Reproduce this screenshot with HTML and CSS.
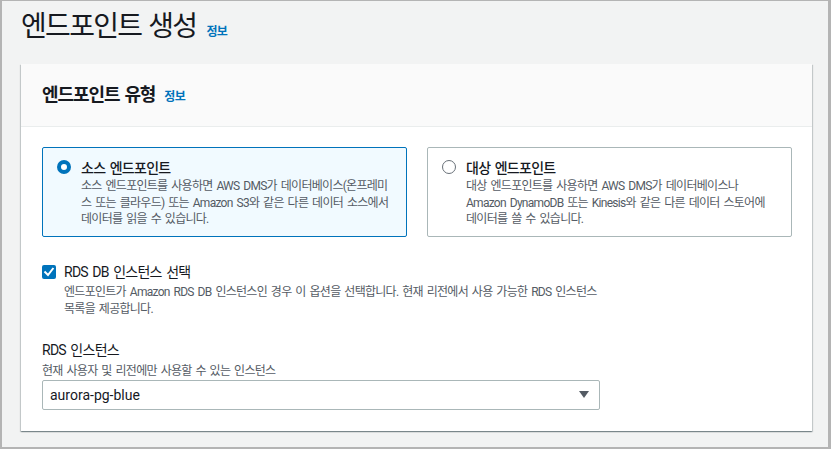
FILE: index.html
```html
<!DOCTYPE html>
<html lang="ko">
<head>
<meta charset="utf-8">
<title>엔드포인트 생성</title>
<link rel="stylesheet" href="styles.css">
</head>
<body>
<div class="page">
  <div class="page-head">
    <h1 class="page-title">엔드포인트 생성</h1>
    <a class="info" href="#">정보</a>
  </div>
  <section class="card">
    <div class="card-head">
      <h2 class="card-title">엔드포인트 유형</h2>
      <a class="info" href="#">정보</a>
    </div>
    <div class="card-body">
      <div class="tiles">
        <div class="tile selected">
          <span class="radio on"></span>
          <div class="tile-text">
            <div class="tile-label">소스 엔드포인트</div>
            <div class="desc">소스 엔드포인트를 사용하면 AWS DMS가 데이터베이스(온프레미<br>스 또는 클라우드) 또는 Amazon S3와 같은 다른 데이터 소스에서<br>데이터를 읽을 수 있습니다.</div>
          </div>
        </div>
        <div class="tile">
          <span class="radio"></span>
          <div class="tile-text">
            <div class="tile-label">대상 엔드포인트</div>
            <div class="desc">대상 엔드포인트를 사용하면 AWS DMS가 데이터베이스나<br>Amazon DynamoDB 또는 Kinesis와 같은 다른 데이터 스토어에<br>데이터를 쓸 수 있습니다.</div>
          </div>
        </div>
      </div>
      <div class="check-row">
        <span class="checkbox">
          <svg viewBox="0 0 14 14" width="14" height="14"><path d="M3.2 7.2 L6 10 L10.8 3.8" fill="none" stroke="#fff" stroke-width="2" stroke-linecap="square"/></svg>
        </span>
        <div class="check-text">
          <div class="field-label">RDS DB 인스턴스 선택</div>
          <div class="desc check-desc">엔드포인트가 Amazon RDS DB 인스턴스인 경우 이 옵션을 선택합니다. 현재 리전에서 사용 가능한 RDS 인스턴스<br>목록을 제공합니다.</div>
        </div>
      </div>
      <div class="field">
        <div class="field-label">RDS 인스턴스</div>
        <div class="desc field-desc">현재 사용자 및 리전에만 사용할 수 있는 인스턴스</div>
        <div class="select">
          <span class="select-value">aurora-pg-blue</span>
          <span class="caret"></span>
        </div>
      </div>
    </div>
  </section>
</div>
</body>
</html>
```
FILE: styles.css
```css
* { box-sizing: border-box; }
html, body { margin: 0; padding: 0; }
body {
  width: 831px;
  height: 449px;
  overflow: hidden;
  background: #f2f3f3;
  border: 2px solid #b4b4b4;
  border-top-width: 1px;
  border-right-width: 3px;
  font-family: Roboto, "Noto Sans CJK KR", sans-serif;
  color: #16191f;
  font-feature-settings: "palt";
  letter-spacing: -0.045em;
  word-spacing: 0.1em;
}
.page {
  padding: 8px 16px 0 19px;
}
.page-head {
  display: flex;
  align-items: baseline;
  gap: 10px;
  height: 36px;
}
.page-title {
  margin: 0;
  font-size: 28px;
  line-height: 36px;
  font-weight: 400;
  letter-spacing: -0.06em;
}
.info {
  color: #0073bb;
  font-size: 12px;
  font-weight: 700;
  text-decoration: none;
}
.card {
  margin-top: 19px;
  background: #fff;
  box-shadow: 0 1px 1px 0 rgba(0, 28, 36, 0.3), 1px 1px 1px 0 rgba(0, 28, 36, 0.15), -1px 1px 1px 0 rgba(0, 28, 36, 0.15);
}
.card-head {
  display: flex;
  align-items: baseline;
  gap: 9px;
  padding: 20px 21px;
  background: #fafafa;
  border-bottom: 1px solid #eaeded;
}
.card-title {
  margin: 0;
  font-size: 18px;
  line-height: 22px;
  font-weight: 700;
  letter-spacing: -0.06em;
}
.card-body {
  padding: 20px 20px 21px 21px;
}
.tiles {
  display: grid;
  grid-template-columns: 1fr 1fr;
  gap: 20px;
}
.tile {
  display: flex;
  align-items: flex-start;
  gap: 10px;
  height: 90px;
  padding: 10px 8px 12px 14px;
  border: 1px solid #aab7b8;
  border-radius: 2px;
  background: #fff;
}
.tile.selected {
  border-color: #0073bb;
  background: #f1faff;
}
.radio {
  flex: none;
  width: 14px;
  height: 14px;
  margin-top: 2px;
  border-radius: 50%;
  border: 1.5px solid #687078;
  background: #fff;
}
.radio.on {
  border: 4px solid #0073bb;
}
.tile-text { flex: 1; }
.tile-label {
  font-size: 14px;
  line-height: 20px;
  font-weight: 500;
}
.desc {
  font-size: 12px;
  line-height: 16.5px;
  color: #545b64;
}
.check-row {
  display: flex;
  align-items: flex-start;
  gap: 8px;
  margin-top: 25px;
}
.checkbox {
  flex: none;
  display: flex;
  width: 14px;
  height: 14px;
  margin-top: 3px;
  border-radius: 2px;
  background: #0073bb;
}
.field-label {
  font-size: 14px;
  line-height: 20px;
}
.check-desc {
  margin-top: 2px;
}
.field {
  margin-top: 23px;
}
.field-desc {
  margin-top: 3px;
}
.select {
  display: flex;
  align-items: center;
  justify-content: space-between;
  width: 558px;
  height: 30px;
  margin-top: 0;
  padding: 0 10px 0 7px;
  border: 1px solid #aab7b8;
  border-radius: 2px;
  background: #fff;
}
.select-value {
  font-size: 14px;
  letter-spacing: 0;
  word-spacing: 0;
}
.caret {
  width: 0;
  height: 0;
  border-left: 5px solid transparent;
  border-right: 5px solid transparent;
  border-top: 7px solid #545b64;
}
```
